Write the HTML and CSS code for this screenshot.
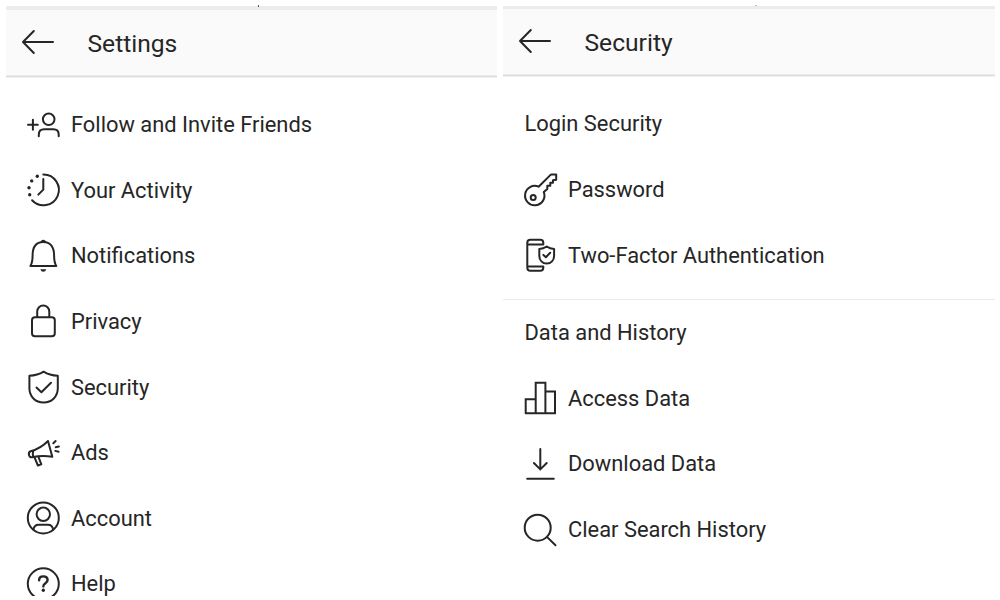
FILE: index.html
```
<!DOCTYPE html>
<html lang="en">
<head>
<meta charset="utf-8">
<title>Settings</title>
<link rel="stylesheet" href="styles.css">
</head>
<body>
<main class="screens">
  <section class="panel settings">
    <span class="speck"></span>
    <header class="bar">
      <svg class="back" viewBox="0 0 40 32"><path d="M34 16H4M14.800 5 4 16l10.800 11"/></svg>
      <h1>Settings</h1>
    </header>
    <ul class="list">
      <li class="row"><svg class="icon" viewBox="0 0 40 40"><circle cx="25.700" cy="14.300" r="5.800"/><path d="M15.800 31.300v-1.600q0-5.400 5.400-5.400h9.100q5.400 0 5.400 5.400v1.600M5 19.800h9.800M9.900 14.800v10"/></svg><span>Follow and Invite Friends</span></li>
      <li class="row"><svg class="icon" viewBox="0 0 40 40"><path d="M20.300 4.500a15.400 15.400 0 1 1-11.200 25.800M20.300 9v10.600l-5 5"/><g class="solid"><circle cx="14.300" cy="6.200" r="1.700"/><circle cx="8.700" cy="10.900" r="1.700"/><circle cx="6" cy="17.700" r="1.700"/><circle cx="6.700" cy="24.700" r="1.700"/></g></svg><span>Your Activity</span></li>
      <li class="row"><svg class="icon" viewBox="0 0 40 40"><path d="M7.400 30h25.900q-2.200-3.500-2.200-10.500C31.100 11 27.500 6 20.300 6S9.600 11 9.600 19.500Q9.600 26.500 7.400 30z"/><path class="solid" d="M17.300 6.700q.7-3 3-3t3 3zM17.300 33.300h6q-.8 2.500-3 2.500t-3-2.500z"/></svg><span>Notifications</span></li>
      <li class="row"><svg class="icon" viewBox="0 0 40 40"><rect x="9" y="16.200" width="22.800" height="19" rx="3"/><path d="M14.200 16v-5.500a6.050 6.050 0 0 1 12.100 0V16"/></svg><span>Privacy</span></li>
      <li class="row"><svg class="icon" viewBox="0 0 40 40"><path d="M20.600 4.700q-6 3.900-14.200 4.100v12.500c0 8.200 6 14.200 14.200 14.200s14.200-6 14.200-14.200V8.800q-8.200-.2-14.200-4.100zM13.500 20.500l4.900 4.700 9.600-9.400"/></svg><span>Security</span></li>
      <li class="row"><svg class="icon" viewBox="0 0 40 40"><path d="M25 8l4.300 15.700Q19 21.800 9 24.300q-2.300.4-3-2.300-.7-2.800 1.600-3.700Q17.500 15.600 25 8zM10.300 17.900q-1 2.700 0 6M11.400 24.200l3.500 8.300 3.400-1.100-2.800-7.600M30.300 10.200l2.300-2.200M32.700 14.200l3.200-.7M32.300 17.900l3.300.8"/></svg><span>Ads</span></li>
      <li class="row"><svg class="icon" viewBox="0 0 40 40"><circle cx="20.300" cy="19.900" r="15.500"/><circle cx="20.300" cy="16.300" r="6.700"/><path d="M10.400 31.700q.8-4.900 5.300-4.900h9.200q4.500 0 5.300 4.900"/></svg><span>Account</span></li>
      <li class="row"><svg class="icon" viewBox="0 0 40 40"><circle cx="20.300" cy="19.800" r="15.500"/><path class="bold" d="M16.100 16.300c0-2.500 1.700-3.900 4.200-3.900s4.300 1.400 4.300 3.700c0 3.300-4.300 3-4.300 6.300"/><circle class="solid" cx="20.300" cy="26.200" r="1.700"/></svg><span>Help</span></li>
    </ul>
  </section>

  <section class="panel security">
    <span class="speck"></span>
    <header class="bar">
      <svg class="back" viewBox="0 0 40 32"><path d="M34 16H4M14.800 5 4 16l10.800 11"/></svg>
      <h1>Security</h1>
    </header>
    <div class="group">
      <h2 class="row">Login Security</h2>
      <div class="row"><svg class="icon" viewBox="0 0 40 40"><path d="M18.600 16.700 30.300 5.100q.5-.5 1.200-.5h4.700v5.100l-3.200.6v2.500h-2.700v3h-3v3.100l-3.500 3.200A9.700 9.700 0 1 1 18.600 16.700z"/><circle cx="13.200" cy="27.600" r="2.500"/></svg><span>Password</span></div>
      <div class="row"><svg class="icon" viewBox="0 0 40 40"><path d="M23.300 9.500V7.800q0-3-3-3H10.300q-3 0-3 3v25q0 3 3 3h10q3 0 3-3v-1.300M7.300 9.500h16M7.300 31.500h16M26.700 11.500q-3.300 2.300-7.400 2.400v6.800c0 4.700 3.100 7.900 7.400 7.900s7.400-3.200 7.400-7.900v-6.800q-4.100-.1-7.400-2.400zM23.400 19.900l2.500 2.300 4.300-4.500"/></svg><span>Two-Factor Authentication</span></div>
    </div>
    <div class="group">
      <h2 class="row">Data and History</h2>
      <div class="row"><svg class="icon square" viewBox="0 0 40 40"><path d="M5.700 35.300v-14h10M15.700 35.300V4.800h9.700v30.500M25.400 13.400h9.600v21.900H5.700"/></svg><span>Access Data</span></div>
      <div class="row"><svg class="icon" viewBox="0 0 40 40"><path d="M20.300 4.900v20.500M13.900 19l6.400 6.400 6.400-6.400M7.200 34.800h26.600"/></svg><span>Download Data</span></div>
      <div class="row"><svg class="icon" viewBox="0 0 40 40"><circle cx="17.700" cy="17.700" r="13"/><path d="M26.900 26.900 35.500 35.300"/></svg><span>Clear Search History</span></div>
    </div>
  </section>
</main>
</body>
</html>
```
FILE: styles.css
```
* {
  box-sizing: border-box;
}

body {
  margin: 0;
  background: #fff;
  color: #262626;
  font-family: Roboto, "Liberation Sans", sans-serif;
}

h1, h2, ul {
  margin: 0;
  padding: 0;
  font-weight: 400;
  list-style: none;
}

.screens {
  display: grid;
  grid-template-columns: 491px 492px;
  gap: 6px;
  height: 596px;
  padding: 6px 5px 0 6px;
  overflow: hidden;
}

.panel {
  position: relative;
  min-width: 0;
}

.bar {
  display: flex;
  align-items: center;
  height: 71px;
  padding-left: 13px;
  border-top: 4px solid #ececec;
  border-bottom: 1px solid #dcdcdc;
  background: #fafafa;
  box-shadow: inset 0 -1px #ececec, 0 1px #f2f2f2;
}

.security .bar {
  height: 70px;
  border-top-width: 3px;
}

.back {
  width: 40px;
  height: 32px;
  margin: -2px 28.500px 0 0;
}

.bar h1 {
  padding-top: 2px;
  font-size: 24.600px;
  line-height: 32px;
}

svg {
  flex: none;
  fill: none;
  stroke: #262626;
  stroke-width: 2;
  stroke-linecap: round;
  stroke-linejoin: round;
}

.square {
  stroke-linejoin: miter;
}

.bold {
  stroke-width: 2.400;
}

.solid {
  fill: #262626;
  stroke: none;
}

.list {
  padding: 14.900px 0 0 17px;
}

.group {
  padding: 15.400px 0 10.800px 17px;
}

.group + .group {
  padding-top: 0;
  border-top: 1px solid #ebebeb;
}

.row {
  display: flex;
  align-items: center;
  height: 65.600px;
  font-size: 21.880px;
  line-height: 30px;
}

.row span {
  padding-top: 1px;
}

h2.row {
  padding: 0 0 0 4.500px;
}

.icon {
  width: 40px;
  height: 40px;
  margin-right: 8px;
}

.speck {
  position: absolute;
  top: -1px;
  left: 252px;
  width: 1px;
  height: 2px;
  background: #555;
}

.security .speck {
  width: 2px;
  height: 1px;
  background: #bbb;
}
```
